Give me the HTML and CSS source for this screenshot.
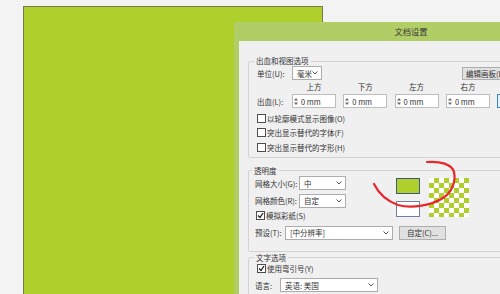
FILE: index.html
```html
<!DOCTYPE html>
<html lang="zh-CN">
<head>
    <meta charset="UTF-8">
    <title>文档设置</title>
    <link rel="stylesheet" href="styles.css">
</head>
<body>
    <div class="artboard"></div>

    <div class="dialog">
        <div class="titlebar">文档设置</div>
        <div class="client">

            <fieldset class="group g-bleed">
                <legend>出血和视图选项</legend>
                <div class="row unit-row">
                    <span class="lbl lbl-unit">单位(U):</span>
                    <div class="select sel-unit"><span>毫米</span><svg width="6" height="4"><path d="M0.5 0.5L3 3 5.5 0.5" fill="none" stroke="#555"/></svg></div>
                    <button class="btn btn-edit">编辑画板(D)</button>
                </div>
                <div class="row heads">
                    <span>上方</span><span>下方</span><span>左方</span><span>右方</span>
                </div>
                <div class="row bleed-row">
                    <span class="lbl lbl-unit">出血(L):</span>
                    <div class="spin"><svg width="4" height="9"><path d="M0 3.5L2 1 4 3.5ZM0 5.5L2 8 4 5.5Z" fill="#666"/></svg><span>0 mm</span></div>
                    <div class="spin"><svg width="4" height="9"><path d="M0 3.5L2 1 4 3.5ZM0 5.5L2 8 4 5.5Z" fill="#666"/></svg><span>0 mm</span></div>
                    <div class="spin"><svg width="4" height="9"><path d="M0 3.5L2 1 4 3.5ZM0 5.5L2 8 4 5.5Z" fill="#666"/></svg><span>0 mm</span></div>
                    <div class="spin"><svg width="4" height="9"><path d="M0 3.5L2 1 4 3.5ZM0 5.5L2 8 4 5.5Z" fill="#666"/></svg><span>0 mm</span></div>
                    <div class="link-btn"></div>
                </div>
                <div class="check first"><span class="box"></span>以轮廓模式显示图像(O)</div>
                <div class="check"><span class="box"></span>突出显示替代的字体(F)</div>
                <div class="check"><span class="box"></span>突出显示替代的字形(H)</div>
            </fieldset>

            <fieldset class="group g-trans">
                <legend>透明度</legend>
                <div class="trans-top">
                    <div class="trans-left">
                        <div class="row sel-row">
                            <span class="lbl lbl-grid">网格大小(G):</span>
                            <div class="select sel-grid"><span>中</span><svg width="6" height="4"><path d="M0.5 0.5L3 3 5.5 0.5" fill="none" stroke="#555"/></svg></div>
                        </div>
                        <div class="row sel-row second">
                            <span class="lbl lbl-grid">网格颜色(R):</span>
                            <div class="select sel-grid"><span>自定</span><svg width="6" height="4"><path d="M0.5 0.5L3 3 5.5 0.5" fill="none" stroke="#555"/></svg></div>
                        </div>
                        <div class="check paper"><span class="box"><svg width="7" height="7"><path d="M1 3.5L3 5.5 6 1" fill="none" stroke="#222" stroke-width="1.3"/></svg></span>模拟彩纸(S)</div>
                    </div>
                    <div class="swatches">
                        <div class="swatch green"></div>
                        <div class="swatch white"></div>
                    </div>
                    <div class="checker"></div>
                </div>
                <div class="row preset-row">
                    <span class="lbl lbl-preset">预设(T):</span>
                    <div class="select sel-preset"><span>[中分辨率]</span><svg width="6" height="4"><path d="M0.5 0.5L3 3 5.5 0.5" fill="none" stroke="#555"/></svg></div>
                    <button class="btn btn-custom">自定(C)...</button>
                </div>
            </fieldset>

            <fieldset class="group g-text">
                <legend>文字选项</legend>
                <div class="check quotes"><span class="box"><svg width="7" height="7"><path d="M1 3.5L3 5.5 6 1" fill="none" stroke="#222" stroke-width="1.3"/></svg></span>使用弯引号(Y)</div>
                <div class="row lang-row">
                    <span class="lbl lbl-lang">语言:</span>
                    <div class="select sel-lang"><span>英语: 美国</span><svg width="6" height="4"><path d="M0.5 0.5L3 3 5.5 0.5" fill="none" stroke="#555"/></svg></div>
                </div>
            </fieldset>

        </div>
    </div>

    <!-- hand-drawn red mark -->
    <svg class="scribble" width="500" height="294">
        <path d="M374 184 C378 192 384 200 398 205 C412 209 432 205 443 198 C452 192 456 182 454 172 C452 164 440 161 427 162" fill="none" stroke="#e8262b" stroke-width="2.2" stroke-linecap="round"/>
    </svg>
</body>
</html>
```

FILE: styles.css
```css
* {
    margin: 0;
    padding: 0;
    box-sizing: border-box;
}

body {
    position: relative;
    width: 500px;
    height: 294px;
    overflow: hidden;
    background-color: #f3f3f3;
    font-family: "Noto Sans CJK SC", sans-serif;
    font-size: 7.5px;
    color: #333;
}

.artboard {
    position: absolute;
    left: 23px;
    top: 6px;
    width: 300px;
    height: 288px;
    background-color: #afcf2c;
    border: 1px solid #74794f;
    border-bottom: none;
}

.dialog {
    position: absolute;
    left: 234px;
    top: 22px;
    width: 266px;
    height: 272px;
    overflow: hidden;
    background-color: #b1ce66;
    display: flex;
    flex-direction: column;
}

.titlebar {
    height: 19px;
    line-height: 19px;
    text-align: center;
    padding-left: 88px;
    font-size: 8.3px;
    color: #3b3b3b;
    flex-shrink: 0;
}

.client {
    flex: 1;
    margin-left: 5px;
    background-color: #f0f0f0;
    padding: 15px 0 0 9px;
    overflow: hidden;
}

.group {
    width: 256px;
    border: 1px solid #d3d3d3;
    border-radius: 2px;
    padding: 0 0 2px 8px;
    min-inline-size: 0;
}

.group legend {
    line-height: 10px;
    padding: 0 2px;
    margin-left: -3px;
}

.row {
    display: flex;
    align-items: center;
}

.lbl {
    flex-shrink: 0;
    white-space: nowrap;
}

.select {
    height: 14px;
    background-color: #fff;
    border: 1px solid #acacac;
    display: flex;
    align-items: center;
    justify-content: space-between;
    padding: 0 3px 0 4px;
    flex-shrink: 0;
}

.btn {
    font: inherit;
    color: #333;
    height: 14px;
    line-height: 12px;
    padding: 0 3px;
    background-color: #e1e1e1;
    border: 1px solid #adadad;
    white-space: nowrap;
    flex-shrink: 0;
}

/* bleed group */

.unit-row {
    height: 14px;
}

.lbl-unit {
    width: 35px;
}

.sel-unit {
    width: 30px;
}

.btn-edit {
    margin-left: 140px;
    height: 13px;
}

.heads {
    height: 13px;
    padding-left: 35px;
    gap: 7.3px;
}

.heads span {
    width: 44px;
    text-align: center;
}

.bleed-row {
    height: 14px;
    margin-top: 1px;
    gap: 7.3px;
}

.bleed-row .lbl {
    margin-right: -7.3px;
}

.spin {
    width: 44px;
    height: 14px;
    background-color: #fff;
    border: 1px solid #bdbdbd;
    display: flex;
    align-items: center;
    gap: 3px;
    padding-left: 1px;
    flex-shrink: 0;
}

.link-btn {
    width: 10px;
    height: 14px;
    background-color: #e5f1fb;
    border: 1px solid #3d84c6;
    flex-shrink: 0;
}

.check {
    display: flex;
    align-items: center;
    gap: 1px;
    height: 14.5px;
    white-space: nowrap;
}

.check.first {
    margin-top: 3px;
}

.box {
    width: 9px;
    height: 9px;
    background-color: #fff;
    border: 1px solid #4d4d4d;
    display: flex;
    align-items: center;
    justify-content: center;
    flex-shrink: 0;
}

/* transparency group */

.g-trans {
    margin-top: 8px;
    padding: 0 0 10px 6px;
}

.trans-top {
    display: flex;
}

.sel-row {
    height: 15px;
}

.sel-row.second {
    height: 16px;
    margin-top: 2px;
}

.lbl-grid {
    width: 44px;
}

.sel-grid {
    width: 47px;
}

.check.paper {
    height: 14px;
    padding-left: 1px;
}

.swatches {
    margin-left: 50px;
    padding-top: 2px;
}

.swatch {
    width: 24px;
    height: 16px;
}

.swatch.green {
    background-color: #afcf2c;
    border: 1px solid #40577e;
}

.swatch.white {
    margin-top: 7px;
    background-color: #fff;
    border: 1px solid #6f7f9c;
}

.checker {
    width: 40px;
    height: 39px;
    margin: 2px 0 0 9px;
    background-color: #fff;
    background-image: conic-gradient(#afcf2c 25%, transparent 0 50%, #afcf2c 0 75%, transparent 0);
    background-size: 10px 10px;
}

.preset-row {
    height: 16px;
    margin-top: 2px;
}

.lbl-preset {
    width: 30px;
}

.sel-preset {
    width: 108px;
}

.btn-custom {
    width: 47px;
    margin-left: 6px;
}

/* text group */

.g-text {
    margin-top: 1px;
    padding-left: 8px;
}

.check.quotes {
    height: 11px;
}

.lang-row {
    height: 15px;
    margin-top: 4px;
    margin-left: -2px;
}

.lbl-lang {
    width: 25px;
}

.sel-lang {
    width: 98px;
}

.scribble {
    position: absolute;
    left: 0;
    top: 0;
}
```
